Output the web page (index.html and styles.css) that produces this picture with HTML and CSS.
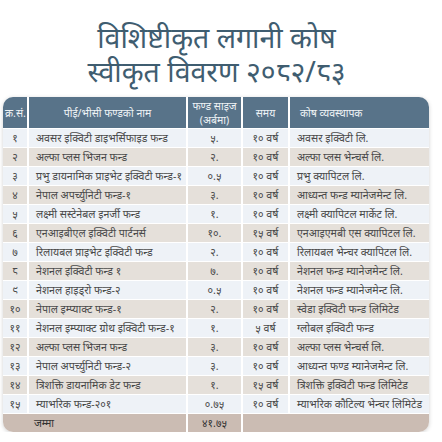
FILE: index.html
```html
<!DOCTYPE html>
<html lang="ne">
<head>
    <meta charset="UTF-8">
    <meta name="viewport" content="width=device-width, initial-scale=1.0">
    <title>विशिष्टीकृत लगानी कोष</title>
    <link rel="stylesheet" href="styles.css">
</head>
<body>
    <section class="page">
        <h1 class="title">
            <span class="title-line">विशिष्टीकृत लगानी कोष</span>
            <span class="title-line">स्वीकृत विवरण २०८२/८३</span>
        </h1>

        <div class="table-wrap">
            <table class="fund-table">
                <colgroup>
                    <col class="c-sn">
                    <col class="c-name">
                    <col class="c-size">
                    <col class="c-time">
                    <col class="c-manager">
                </colgroup>
                <thead>
                    <tr>
                        <th>क्र.सं.</th>
                        <th>पीई/भीसी फण्डको नाम</th>
                        <th>फण्ड साइज<br>(अर्बमा)</th>
                        <th>समय</th>
                        <th class="left">कोष व्यवस्थापक</th>
                    </tr>
                </thead>
                <tbody>
                    <tr><td>१</td><td>अवसर इक्विटी डाइभर्सिफाइड फन्ड</td><td>५.</td><td>१० वर्ष</td><td>अवसर इक्विटी लि.</td></tr>
                    <tr><td>२</td><td>अल्फा प्लस भिजन फन्ड</td><td>२.</td><td>१० वर्ष</td><td>अल्फा प्लस भेन्चर्स लि.</td></tr>
                    <tr><td>३</td><td>प्रभु डायनामिक प्राइभेट इक्विटी फन्ड-१</td><td>०.५</td><td>१० वर्ष</td><td>प्रभु क्यापिटल लि.</td></tr>
                    <tr><td>४</td><td>नेपाल अपर्च्युनिटी फन्ड-१</td><td>३.</td><td>१० वर्ष</td><td>आध्यन्त फन्ड म्यानेजमेन्ट लि.</td></tr>
                    <tr><td>५</td><td>लक्ष्मी सस्टेनेबल इनर्जी फन्ड</td><td>१.</td><td>१० वर्ष</td><td>लक्ष्मी क्यापिटल मार्केट लि.</td></tr>
                    <tr><td>६</td><td>एनआइबीएल इक्विटी पार्टनर्स</td><td>१०.</td><td>१५ वर्ष</td><td>एनआइएमबी एस क्यापिटल लि.</td></tr>
                    <tr><td>७</td><td>रिलायबल प्राइभेट इक्विटी फन्ड</td><td>२.</td><td>१० वर्ष</td><td>रिलायबल भेन्चर क्यापिटल लि.</td></tr>
                    <tr><td>८</td><td>नेशनल इक्विटी फन्ड १</td><td>७.</td><td>१० वर्ष</td><td>नेशनल फन्ड म्यानेजमेन्ट लि.</td></tr>
                    <tr><td>९</td><td>नेशनल हाइड्रो फन्ड-२</td><td>०.५</td><td>१० वर्ष</td><td>नेशनल फन्ड म्यानेजमेन्ट लि.</td></tr>
                    <tr><td>१०</td><td>नेपाल इम्प्याक्ट फन्ड-१</td><td>२.</td><td>१० वर्ष</td><td>स्वेडा इक्विटी फन्ड लिमिटेड</td></tr>
                    <tr><td>११</td><td>नेशनल इम्प्याक्ट ग्रोथ इक्विटी फन्ड-१</td><td>१.</td><td>५ वर्ष</td><td>ग्लोबल इक्विटी फन्ड</td></tr>
                    <tr><td>१२</td><td>अल्फा प्लस भिजन फन्ड</td><td>३.</td><td>१० वर्ष</td><td>अल्फा प्लस भेन्चर्स लि.</td></tr>
                    <tr><td>१३</td><td>नेपाल अपर्च्युनिटी फन्ड-२</td><td>३.</td><td>१० वर्ष</td><td>आध्यन्त फण्ड म्यानेजमेन्ट लि.</td></tr>
                    <tr><td>१४</td><td>त्रिशक्ति डायनामिक डेट फन्ड</td><td>१.</td><td>१५ वर्ष</td><td>त्रिशक्ति इक्विटी फन्ड लिमिटेड</td></tr>
                    <tr><td>१५</td><td>म्याभरिक फन्ड-२०१</td><td>०.७५</td><td>१० वर्ष</td><td>म्याभरिक कौटिल्य भेन्चर लिमिटेड</td></tr>
                </tbody>
                <tfoot>
                    <tr>
                        <td colspan="2">जम्मा</td>
                        <td>४१.७५</td>
                        <td colspan="2"></td>
                    </tr>
                </tfoot>
            </table>
        </div>
    </section>
</body>
</html>
```

FILE: styles.css
```css
body {
    margin: 0;
    padding: 0;
    background-color: #ffffff;
    font-family: 'Noto Sans', sans-serif;
}

.page {
    padding: 20px 12px 0 3px;
}

.title {
    margin: 0 0 9px;
    text-align: center;
    font-size: 28.5px;
    font-weight: normal;
    color: #3f5d70;
}

.title-line {
    display: block;
    line-height: 34px;
}

.table-wrap {
    width: 426px;
    border-radius: 10px;
    overflow: hidden;
    box-shadow: 0 1px 4px rgba(0, 0, 0, 0.18);
}

.fund-table {
    width: 100%;
    border-collapse: collapse;
    table-layout: fixed;
    font-size: 10.6px;
    color: #4a4a4a;
}

.c-sn { width: 25px; }
.c-name { width: 159px; }
.c-size { width: 55px; }
.c-time { width: 47px; }
.c-manager { width: 140px; }

.fund-table th {
    height: 31px;
    padding: 0 2px;
    background-color: #587389;
    color: #eef2f5;
    font-weight: normal;
    font-size: 10.5px;
    line-height: 14px;
    text-align: center;
    border-left: 2px solid #ffffff;
}

.fund-table th.left {
    text-align: left;
    padding-left: 10px;
}

.fund-table td {
    height: 18px;
    padding: 0;
    line-height: 18px;
    text-align: center;
    white-space: nowrap;
    border-left: 2px solid #ffffff;
    border-top: 1px solid #ffffff;
}

.fund-table th:first-child,
.fund-table td:first-child {
    border-left: none;
}

.fund-table tbody td:nth-child(2),
.fund-table tbody td:nth-child(5) {
    text-align: left;
    padding-left: 7px;
}

.fund-table tbody tr:nth-child(odd) {
    background-color: #eef2f7;
}

.fund-table tbody tr:nth-child(even) {
    background-color: #e5e0da;
}

.fund-table tfoot tr {
    background-color: #cbbcb3;
}

.fund-table tfoot td {
    height: 18px;
    color: #333333;
}

.fund-table tfoot td:first-child {
    text-align: left;
    padding-left: 31px;
}
```
